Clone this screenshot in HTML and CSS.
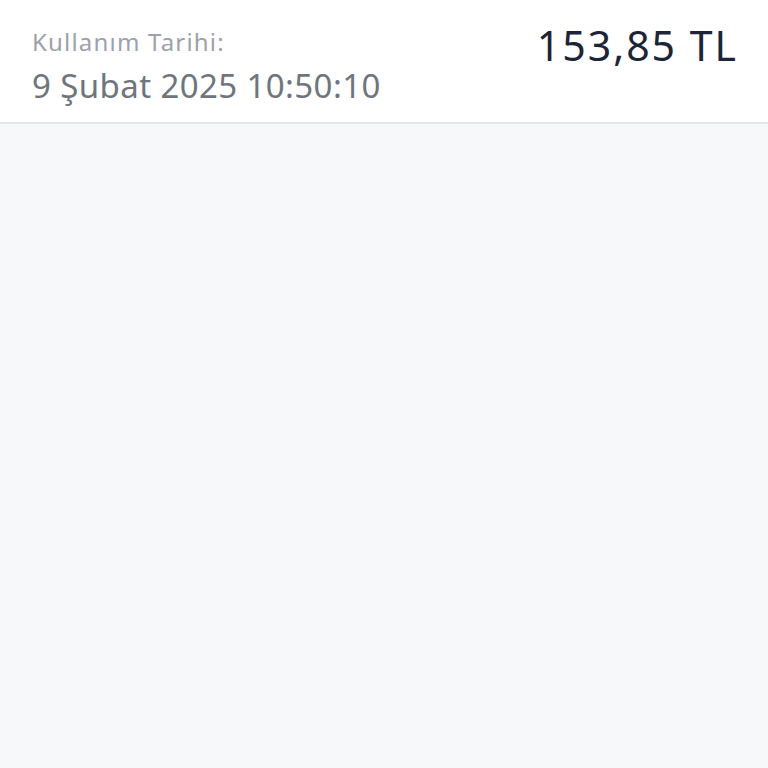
FILE: index.html
```html
<!DOCTYPE html>
<html lang="tr">

<head>
    <meta charset="UTF-8">
    <meta name="viewport" content="width=device-width, initial-scale=1.0">
    <title>Kullanım</title>
    <link rel="stylesheet" href="styles.css">
</head>

<body>
    <div class="card">
        <div class="info">
            <div class="label">Kullanım Tarihi:</div>
            <div class="date">9 Şubat 2025 10:50:10</div>
        </div>
        <div class="amount">153,85 TL</div>
    </div>
</body>

</html>
```

FILE: styles.css
```css
body {
    margin: 0;
    min-height: 768px;
    background-color: #f7f8fa;
    font-family: "Noto Sans", sans-serif;
}

.card {
    display: flex;
    justify-content: space-between;
    align-items: flex-start;
    background-color: #fff;
    border-bottom: 2px solid #e6e7ea;
    padding: 26px 32px 16px 32px;
}

.label {
    color: #9ca1ab;
    font-size: 24px;
    line-height: 32px;
    letter-spacing: 1.2px;
}

.date {
    margin-top: 8px;
    color: #6f747d;
    font-size: 33px;
    line-height: 40px;
    letter-spacing: 0.4px;
}

.amount {
    color: #1d2436;
    font-size: 41px;
    line-height: 50px;
    margin-top: -6px;
    margin-right: -2px;
    letter-spacing: 2px;
}
```
